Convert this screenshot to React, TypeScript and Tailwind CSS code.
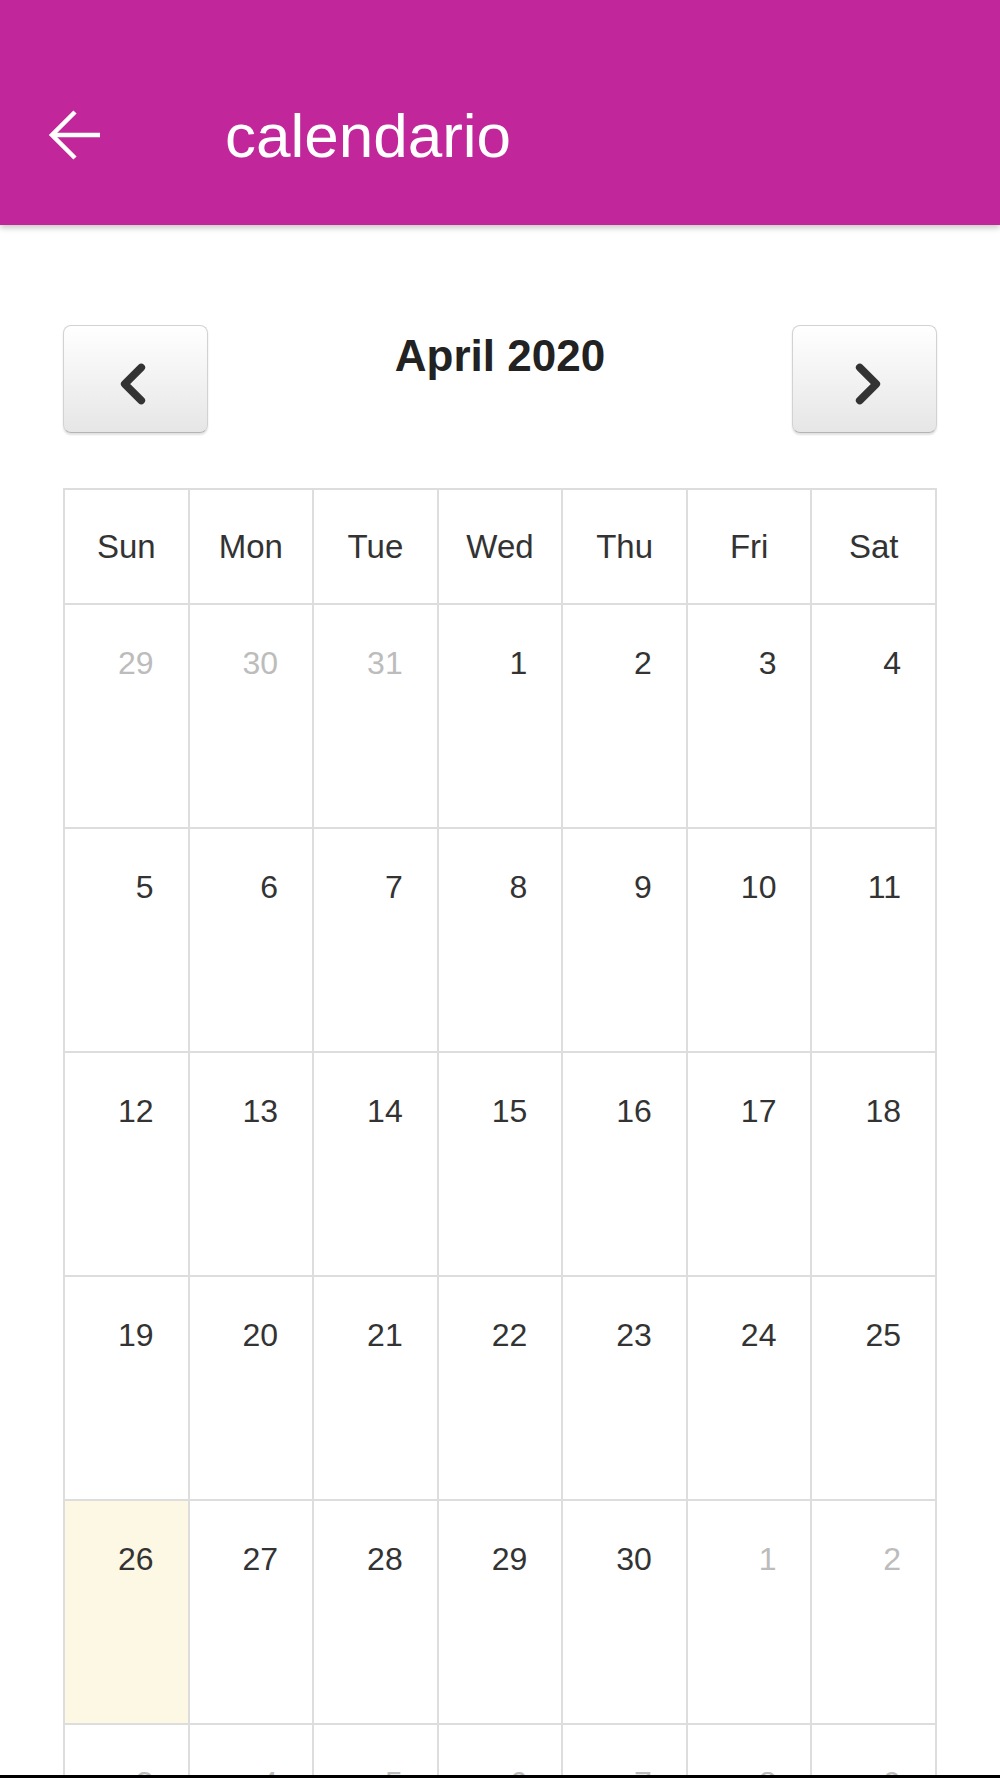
import { ChevronLeft, ChevronRight } from 'lucide-react';

type Day = { n: number; muted?: boolean; today?: boolean };

const weekdays = ['Sun', 'Mon', 'Tue', 'Wed', 'Thu', 'Fri', 'Sat'];

// April 2020, starting on Sunday 29 March
const weeks: Day[][] = [
  [{ n: 29, muted: true }, { n: 30, muted: true }, { n: 31, muted: true }, { n: 1 }, { n: 2 }, { n: 3 }, { n: 4 }],
  [5, 6, 7, 8, 9, 10, 11].map(n => ({ n })),
  [12, 13, 14, 15, 16, 17, 18].map(n => ({ n })),
  [19, 20, 21, 22, 23, 24, 25].map(n => ({ n })),
  [{ n: 26, today: true }, { n: 27 }, { n: 28 }, { n: 29 }, { n: 30 }, { n: 1, muted: true }, { n: 2, muted: true }],
  [3, 4, 5, 6, 7, 8, 9].map(n => ({ n, muted: true })),
];

function BackArrow() {
  return (
    <svg width="52" height="52" viewBox="0 0 52 52" fill="none" stroke="white" strokeWidth="4.5">
      <path d="M52 26H4" />
      <path d="M27 3L4 26l23 23" />
    </svg>
  );
}

export default function App() {
  return (
    <div className="h-[1778px] overflow-hidden flex flex-col bg-white font-['Liberation_Sans',Arial,sans-serif]">

      {/* Toolbar */}
      <header className="relative z-10 h-[225px] shrink-0 bg-[#c2269b] pt-[45px] shadow-[0_3px_6px_rgba(0,0,0,0.22)]">
        <div className="h-[180px] flex items-center pl-[48px]">
          <BackArrow />
          <h1 className="ml-[125px] mt-[2px] text-[62px] leading-none text-white">calendario</h1>
        </div>
      </header>

      {/* Calendar */}
      <main className="flex-1 overflow-hidden px-[63px] pt-[100px]">
        <div className="flex items-start justify-between">
          <button className="w-[145px] h-[108px] flex items-center justify-center rounded-[8px] border border-[#d2d2d2] border-b-[#b4b4b4] bg-gradient-to-b from-white to-[#e6e6e6] shadow-[0_2px_2px_rgba(0,0,0,0.12)]">
            <ChevronLeft className="mt-[10px] -ml-[6px] w-[66px] h-[66px] text-[#333]" strokeWidth={2.8} />
          </button>
          <h2 className="-mt-[2px] text-[44px] font-bold text-[#222]">April 2020</h2>
          <button className="w-[145px] h-[108px] flex items-center justify-center rounded-[8px] border border-[#d2d2d2] border-b-[#b4b4b4] bg-gradient-to-b from-white to-[#e6e6e6] shadow-[0_2px_2px_rgba(0,0,0,0.12)]">
            <ChevronRight className="mt-[10px] ml-[6px] w-[66px] h-[66px] text-[#333]" strokeWidth={2.8} />
          </button>
        </div>

        <div className="mt-[55px] grid grid-cols-7 border-l-2 border-t-2 border-[#ddd]">
          {weekdays.map(d => (
            <div key={d} className="h-[115px] flex items-center justify-center border-r-2 border-b-2 border-[#ddd] text-[33px] text-[#333]">
              {d}
            </div>
          ))}
          {weeks.flat().map((day, i) => (
            <div
              key={i}
              className={`h-[224px] border-r-2 border-b-2 border-[#ddd] pt-[34px] pr-[34px] text-right text-[32px] ${
                day.today ? 'bg-[#fcf8e3]' : ''
              } ${day.muted ? 'text-[#bcbcbc]' : 'text-[#333]'}`}
            >
              {day.n}
            </div>
          ))}
        </div>
      </main>

      <div className="h-[3px] shrink-0 bg-black" />
    </div>
  );
}
